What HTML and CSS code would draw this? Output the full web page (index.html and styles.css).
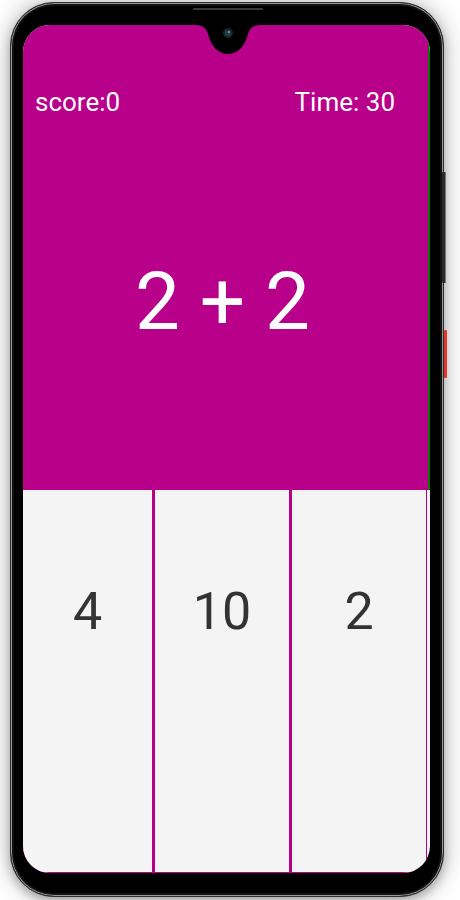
FILE: index.html
```html
<!DOCTYPE html>
<html lang="en">
<head>
<meta charset="utf-8">
<title>Math Game</title>
<link rel="stylesheet" href="styles.css">
</head>
<body>
<div class="phone">
  <span class="speaker"></span>
  <span class="side-btn side-vol"></span>
  <span class="side-btn side-power"></span>
  <div class="screen">
    <svg class="notch" width="66" height="30" viewBox="0 0 66 30" aria-hidden="true">
      <path d="M0 0 H66 C58 0 55 3 53 9 C50 21 43 29 33 29 C23 29 16 21 13 9 C11 3 8 0 0 0 Z" fill="#000"/>
      <circle cx="33" cy="8" r="5" fill="#1b2328"/>
      <circle cx="33" cy="8" r="3" fill="#24404a"/>
      <circle cx="34" cy="7" r="1" fill="#5fa9b8"/>
    </svg>
    <section class="game">
      <div class="board">
        <header class="hud">
          <span class="score">score:0</span>
          <span class="time">Time: 30</span>
        </header>
        <div class="question">2 + 2</div>
      </div>
      <div class="rail"></div>
    </section>
    <div class="answers">
      <button class="answer">4</button>
      <button class="answer">10</button>
      <button class="answer">2</button>
    </div>
  </div>
</div>
</body>
</html>
```

FILE: styles.css
```css
html, body {
  margin: 0;
  padding: 0;
  background: #ffffff;
}

body {
  width: 460px;
  height: 900px;
  overflow: hidden;
  font-family: Roboto, "Liberation Sans", Arial, sans-serif;
}

.phone {
  position: relative;
  width: 407px;
  height: 848px;
  margin: 2px 0 0 10px;
  padding: 22px 13px 23px 12px;
  background: #000;
  border: 1px solid #2e2e2e;
  border-radius: 44px;
  box-shadow:
    inset 0 0 0 1px #9a9a9a,
    inset 0 0 0 3px #111,
    0 0 22px 3px rgba(0, 0, 0, 0.22),
    0 4px 10px rgba(0, 0, 0, 0.25);
}

.speaker {
  position: absolute;
  left: 182px;
  top: 5px;
  width: 70px;
  height: 2px;
  border-radius: 1px;
  background: #3a3a3a;
}

.side-btn {
  position: absolute;
  width: 3px;
  border-radius: 1px;
}

.side-vol {
  right: -3px;
  top: 169px;
  height: 111px;
  background: #2a2a2a;
  border-right: 1px solid #777;
}

.side-power {
  right: -4px;
  top: 327px;
  height: 48px;
  background: #e2352c;
}

.screen {
  position: relative;
  width: 407px;
  height: 848px;
  border-radius: 27px;
  overflow: hidden;
  background: #f4f4f4;
  display: flex;
  flex-direction: column;
}

.notch {
  position: absolute;
  left: 172px;
  top: 0;
  display: block;
}

.game {
  height: 465px;
  display: flex;
  flex-shrink: 0;
}

.board {
  flex: 1;
  background: #b8008a;
  color: #fff;
  display: flex;
  flex-direction: column;
  padding-top: 62px;
}

.rail {
  width: 2px;
  background: #087a00;
}

.hud {
  display: flex;
  justify-content: space-between;
  padding: 0 33px 0 12px;
  font-size: 26px;
  line-height: 30px;
}

.question {
  margin-top: 145px;
  padding-right: 6px;
  text-align: center;
  font-size: 80px;
  line-height: 80px;
}

.answers {
  flex: 1;
  width: 403px;
  display: grid;
  grid-template-columns: 129px 134px 134px;
  column-gap: 3px;
  padding: 0 1px 1px 0;
  background: #b8008a;
}

.answer {
  border: 0;
  margin: 0;
  background: #f4f4f4;
  color: #333;
  font-family: Roboto, "Liberation Sans", Arial, sans-serif;
  font-size: 52px;
  line-height: 60px;
  padding: 92px 0 0;
  display: flex;
  justify-content: center;
  align-items: flex-start;
}
```
